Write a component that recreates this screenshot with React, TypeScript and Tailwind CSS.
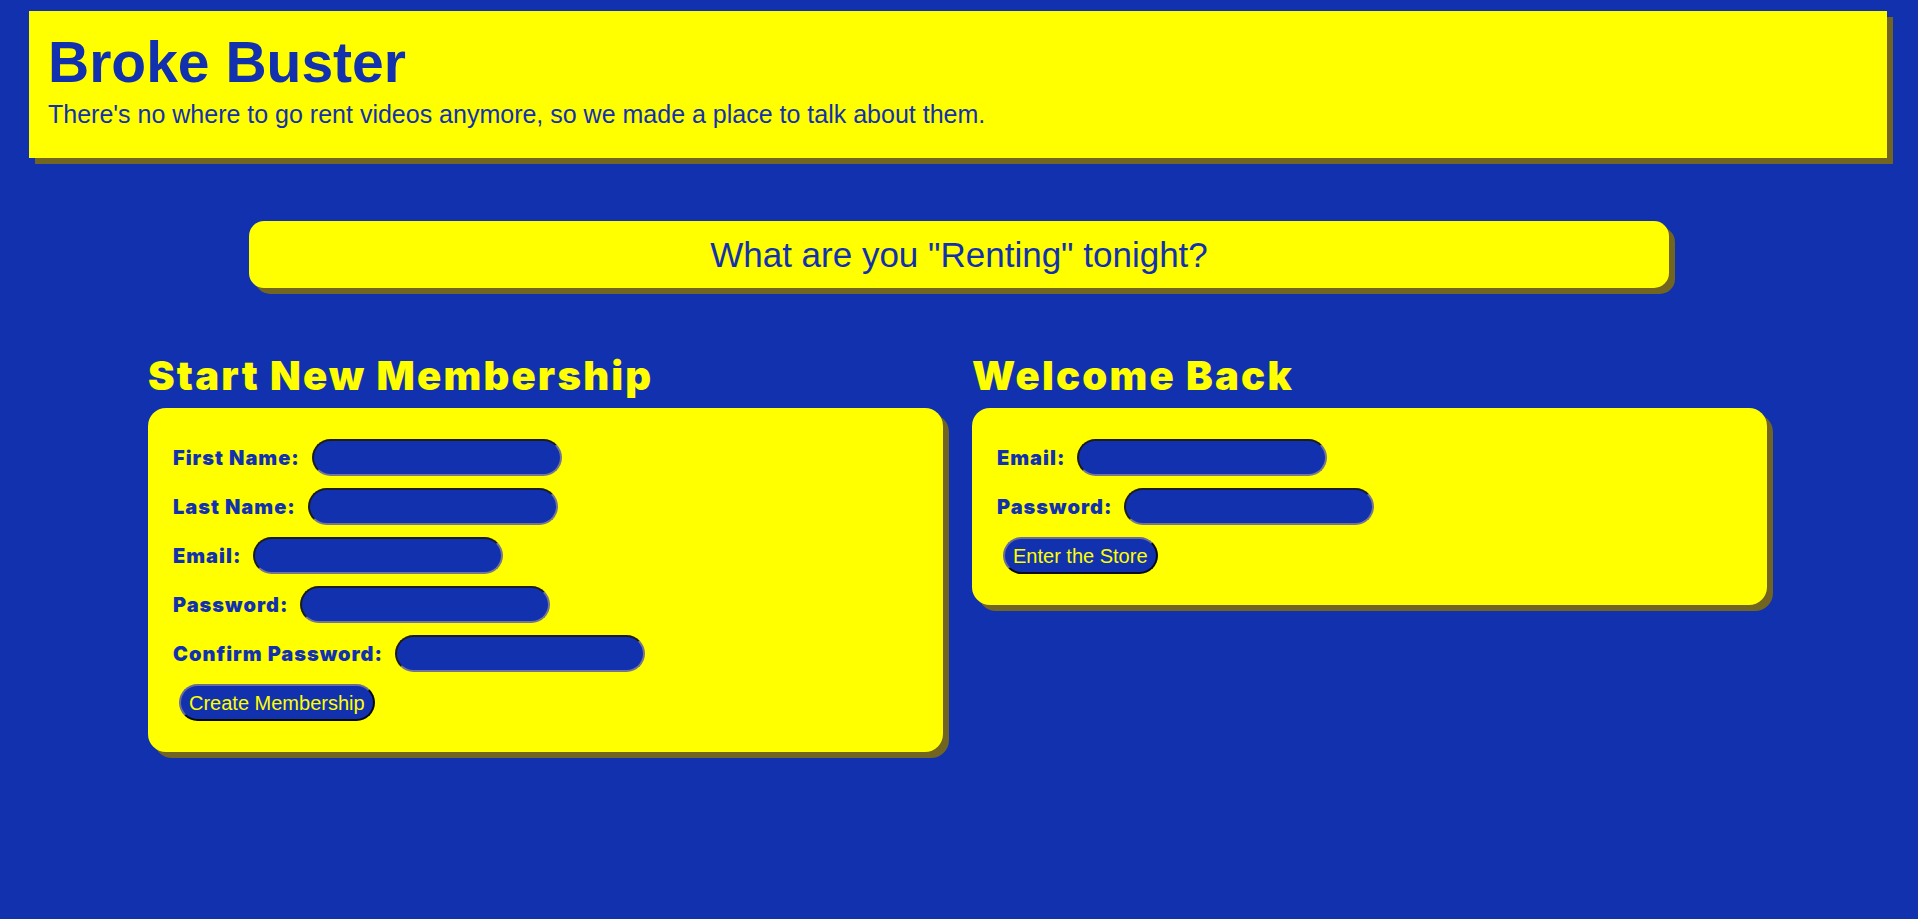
import React from "react";

const Field = ({ label }: { label: string }) => (
  <div className="flex items-center gap-[12px]">
    <label className="font-['Inter',sans-serif] font-black text-[20px] tracking-[1px] leading-none text-[#1231ae]">
      {label}
    </label>
    <input
      type="text"
      className="w-[250px] h-[37px] rounded-full bg-[#1231ae] border-2 border-t-[#1c1c1c] border-l-[#1c1c1c] border-b-[#767690] border-r-[#767690] outline-none"
    />
  </div>
);

const Btn = ({ children }: { children: React.ReactNode }) => (
  <button className="ml-[6px] self-start h-[37px] px-[8px] rounded-full bg-[#1231ae] border-2 border-t-[#6a6e96] border-l-[#6a6e96] border-b-[#0a0a0a] border-r-[#0a0a0a] text-[20px] leading-none text-[#ffff00] font-['Liberation_Sans',Arial,sans-serif]">
    {children}
  </button>
);

export default function App() {
  return (
    <div className="min-h-[919px] w-full bg-[#1231ae] pt-[11px] pb-[40px] font-['Liberation_Sans',Arial,sans-serif] text-[#1231ae]">
      <header className="ml-[29px] w-[1858px] h-[147px] bg-[#ffff00] shadow-[6px_6px_0_0_#716521] pl-[19px] pt-[23px]">
        <h1 className="text-[57px] leading-none font-bold">Broke Buster</h1>
        <p className="mt-[11px] text-[25px] leading-none">
          There's no where to go rent videos anymore, so we made a place to talk about them.
        </p>
      </header>

      <div className="mt-[63px] mx-auto w-[1420px] h-[67px] rounded-[15px] bg-[#ffff00] shadow-[6px_6px_0_0_#716521] flex items-center justify-center">
        <span className="text-[35px] leading-none">What are you "Renting" tonight?</span>
      </div>

      <div className="ml-[148px] w-[1620px] flex gap-[29px] mt-[68px]">
        <section className="w-[795px] flex flex-col">
          <h2 className="font-['Inter',sans-serif] font-black text-[40px] tracking-[2.2px] leading-none text-[#ffff00]">
            Start New Membership
          </h2>
          <div className="mt-[12px] rounded-[18px] bg-[#ffff00] shadow-[6px_6px_0_0_#716521] pl-[25px] pt-[31px] pb-[31px] flex flex-col gap-[12px]">
            <Field label="First Name:" />
            <Field label="Last Name:" />
            <Field label="Email:" />
            <Field label="Password:" />
            <Field label="Confirm Password:" />
            <Btn>Create Membership</Btn>
          </div>
        </section>
        <section className="w-[795px] flex flex-col">
          <h2 className="font-['Inter',sans-serif] font-black text-[40px] tracking-[2.2px] leading-none text-[#ffff00]">
            Welcome Back
          </h2>
          <div className="mt-[12px] rounded-[18px] bg-[#ffff00] shadow-[6px_6px_0_0_#716521] pl-[25px] pt-[31px] pb-[31px] flex flex-col gap-[12px]">
            <Field label="Email:" />
            <Field label="Password:" />
            <Btn>Enter the Store</Btn>
          </div>
        </section>
      </div>
    </div>
  );
}
